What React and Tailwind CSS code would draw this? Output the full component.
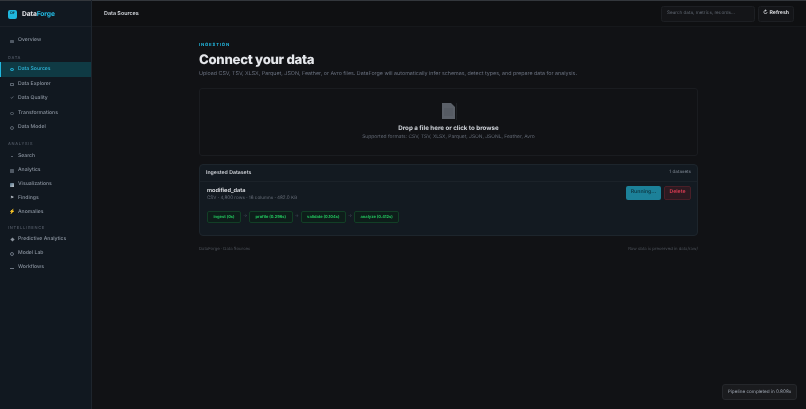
import React from "react";

const Section = ({ children, className }) => (
  <div className={`pl-[8px] text-[4px] leading-[6px] font-medium tracking-[0.7px] text-[#525a66] ${className}`}>{children}</div>
);

const Item = ({ icon, label, active, className = "h-[14.6px]" }) => (
  <div className={`flex items-center gap-[4px] text-[5.1px] font-medium ${className} ${active ? "border-l border-[#22b8e0] bg-[#0f3a44] pl-[9px] text-[#2fb8dc]" : "pl-[10px] text-[#8a939f]"}`}>
    <span className="flex w-[4px] justify-center">{icon}</span>
    <span>{label}</span>
  </div>
);

const Sq = ({ c = "border-[#59626d]" }) => <span className={`block h-[3.5px] w-[3.5px] rounded-[0.5px] border-[0.7px] ${c}`} />;
const Circ = ({ c = "border-[#59626d]" }) => <span className={`block h-[3.5px] w-[3.5px] rounded-full border-[0.7px] ${c}`} />;
const Fill = ({ c = "bg-[#6b7480]" }) => <span className={`block h-[3.5px] w-[3.5px] rounded-[0.5px] ${c}`} />;

const Chip = ({ children }) => (
  <span className="flex h-[12px] items-center rounded-[2px] border-[0.6px] border-[#123f26] bg-[#0e1d1a] px-[5.5px] text-[4px] font-bold whitespace-nowrap text-[#22c55e]">{children}</span>
);

const Arrow = () => <span className="w-[8px] text-center text-[4.5px] text-[#4b5563]">→</span>;

export default function App() {
  return (
    <div className="relative flex h-[409px] w-[806px] overflow-hidden bg-[#111215] font-['Inter',sans-serif] text-[#e5e7eb] blur-[0.2px] [text-rendering:geometricPrecision]">
      <aside className="flex w-[92px] shrink-0 flex-col border-r border-[#1e252d] bg-[#111820]">
        <div className="flex h-[27px] shrink-0 items-center gap-[5px] border-t border-b border-t-[#33373c] border-b-[#1a2028] pt-[1px] pl-[8px]">
          <span className="flex h-[9px] w-[9px] items-center justify-center rounded-[2px] bg-[#1fb6dc] text-[3.6px] font-bold text-[#0d2a33]">DF</span>
          <span className="text-[6.7px] font-bold tracking-[-0.1px]">
            <span className="text-[#e5e7eb]">Data</span>
            <span className="text-[#22b8e0]">Forge</span>
          </span>
        </div>
        <div className="flex flex-col pt-[7px]">
          <Item icon={<Fill c="bg-[#4f5863]" />} label="Overview" />
          <Section className="pt-[6.5px] pb-[1px]">DATA</Section>
          <Item active className="h-[15px]" icon={<Circ c="border-[#22b8e0] bg-[#16596b]" />} label="Data Sources" />
          <Item icon={<Sq />} label="Data Explorer" />
          <Item icon={<span className="text-[4.5px] leading-none text-[#6b7480]">✓</span>} label="Data Quality" />
          <Item icon={<Circ />} label="Transformations" />
          <Item icon={<Circ />} label="Data Model" />
          <Section className="pt-[5.3px] pb-[3px]">ANALYSIS</Section>
          <Item className="h-[14px]" icon={<span className="block h-[1px] w-[1.5px] bg-[#59626d]" />} label="Search" />
          <Item className="h-[14px]" icon={<Fill c="bg-[#4f5863]" />} label="Analytics" />
          <Item className="h-[14px]" icon={<span className="block h-[4px] w-[4px] rounded-[0.5px] bg-gradient-to-br from-[#4b6a80] to-[#c7ccd1]" />} label="Visualizations" />
          <Item className="h-[14px]" icon={<span className="text-[4.5px] leading-none text-[#aab1b9]">⚑</span>} label="Findings" />
          <Item className="h-[14px]" icon={<span className="text-[5px] leading-none text-[#eab308]">⚡</span>} label="Anomalies" />
          <Section className="pt-[5.3px] pb-[1.5px]">INTELLIGENCE</Section>
          <Item className="h-[14.3px]" icon={<span className="block h-[3px] w-[3px] rotate-45 bg-[#8a929c]" />} label="Predictive Analytics" />
          <Item className="h-[14.3px]" icon={<Circ c="border-[#6b7480]" />} label="Model Lab" />
          <Item className="h-[14.3px]" icon={<span className="block h-[0.7px] w-[4px] bg-[#6b7480]" />} label="Workflows" />
        </div>
      </aside>

      <div className="flex min-w-0 flex-1 flex-col">
        <header className="flex h-[27px] shrink-0 items-center justify-between border-t border-b border-t-[#33373c] border-b-[#16181b] bg-[#0f1012] pt-[1.5px] pr-[12px] pl-[12px]">
          <span className="text-[5.4px] font-semibold text-[#d1d5db]">Data Sources</span>
          <div className="flex items-center gap-[3px]">
            <div className="flex h-[16px] w-[94px] items-center rounded-[2.5px] border border-[#1d1f23] bg-[#141518] pl-[5px] text-[4.6px] text-[#5f6670]">Search data, metrics, records...</div>
            <div className="flex h-[16px] w-[36px] items-center justify-center gap-[1.5px] rounded-[2.5px] border border-[#1d1f23] bg-[#141518] text-[5.2px] font-semibold text-[#e5e7eb]">
              <span>↻</span><span>Refresh</span>
            </div>
          </div>
        </header>

        <main className="flex-1 pt-[16px] pl-[107px]">
          <div className="w-[499px]">
            <div className="text-[4.3px] leading-[6px] font-bold tracking-[0.8px] text-[#22b8e0]">INGESTION</div>
            <h1 className="mt-[1.5px] text-[13.2px] leading-[19px] font-extrabold tracking-[-0.3px] text-[#e5e7eb]">Connect your data</h1>
            <p className="mt-[0.5px] text-[5.34px] leading-[8px] text-[#6b7280]">Upload CSV, TSV, XLSX, Parquet, JSON, Feather, or Avro files. DataForge will automatically infer schemas, detect types, and prepare data for analysis.</p>

            <div className="mt-[10px] flex h-[68px] flex-col items-center rounded-[3px] border border-[#1a1c20] bg-[#111215] pt-[14px]">
              <svg width="16" height="17" viewBox="0 0 16 17">
                <path d="M1 0h9l4 4v12H1z" fill="#5b6068" />
                <path d="M3 6h9M3 8h9M3 10h9M3 12h9" stroke="#4a4e55" strokeWidth="0.5" />
                <path d="M15.5 0v17" stroke="#2b2e33" strokeWidth="0.5" />
              </svg>
              <div className="mt-[4.5px] text-[6.2px] leading-[8px] font-bold text-[#d1d5db]">Drop a file here or click to browse</div>
              <div className="mt-[1.5px] text-[4.93px] leading-[7px] text-[#626974]">Supported formats: CSV, TSV, XLSX, Parquet, JSON, JSONL, Feather, Avro</div>
            </div>

            <section className="mt-[8px] h-[72px] rounded-[4px] border border-[#1d252c] bg-[#131a21]">
              <div className="flex h-[17px] items-center justify-between border-b border-[#1b2229] pt-[1px] pr-[6px] pl-[6px]">
                <span className="text-[5.2px] font-semibold text-[#d1d5db]">Ingested Datasets</span>
                <span className="text-[4.6px] text-[#7c8591]">1 datasets</span>
              </div>
              <div className="flex items-start justify-between pt-[4px] pr-[6px] pl-[7px]">
                <div>
                  <div className="pt-[0.5px] text-[5.6px] leading-[8px] font-semibold text-[#e5e7eb]">modified_data</div>
                  <div className="text-[4.6px] leading-[7px] text-[#666d78]">CSV · 4,800 rows · 16 columns · 482.0 KB</div>
                </div>
                <div className="flex gap-[3px]">
                  <span className="flex h-[14px] w-[35px] items-center justify-center rounded-[2px] bg-[#1c8199] text-[5.2px] font-semibold text-[#0e3a46]">Running...</span>
                  <span className="flex h-[14px] w-[27px] items-center justify-center rounded-[2px] border-[0.6px] border-[#4a1f28] bg-[#2c1a21] text-[5.2px] font-semibold text-[#e23d55]">Delete</span>
                </div>
              </div>
              <div className="mt-[9.5px] flex items-center pl-[7px]">
                <Chip>ingest (0s)</Chip>
                <Arrow />
                <Chip>profile (0.296s)</Chip>
                <Arrow />
                <Chip>validate (0.104s)</Chip>
                <Arrow />
                <Chip>analyze (0.412s)</Chip>
              </div>
            </section>

            <div className="mt-[11px] flex justify-between text-[4.25px] leading-[6px] text-[#4d525a]">
              <span>DataForge · Data Sources</span>
              <span>Raw data is preserved in data/raw/</span>
            </div>
          </div>
        </main>
      </div>

      <div className="absolute right-[9px] bottom-[9px] flex h-[16px] w-[75px] items-center justify-center rounded-[3px] border border-[#25272b] bg-[#1a1b1e] text-[4.65px] text-[#9ca3af]">Pipeline completed in 0.808s</div>
    </div>
  );
}
